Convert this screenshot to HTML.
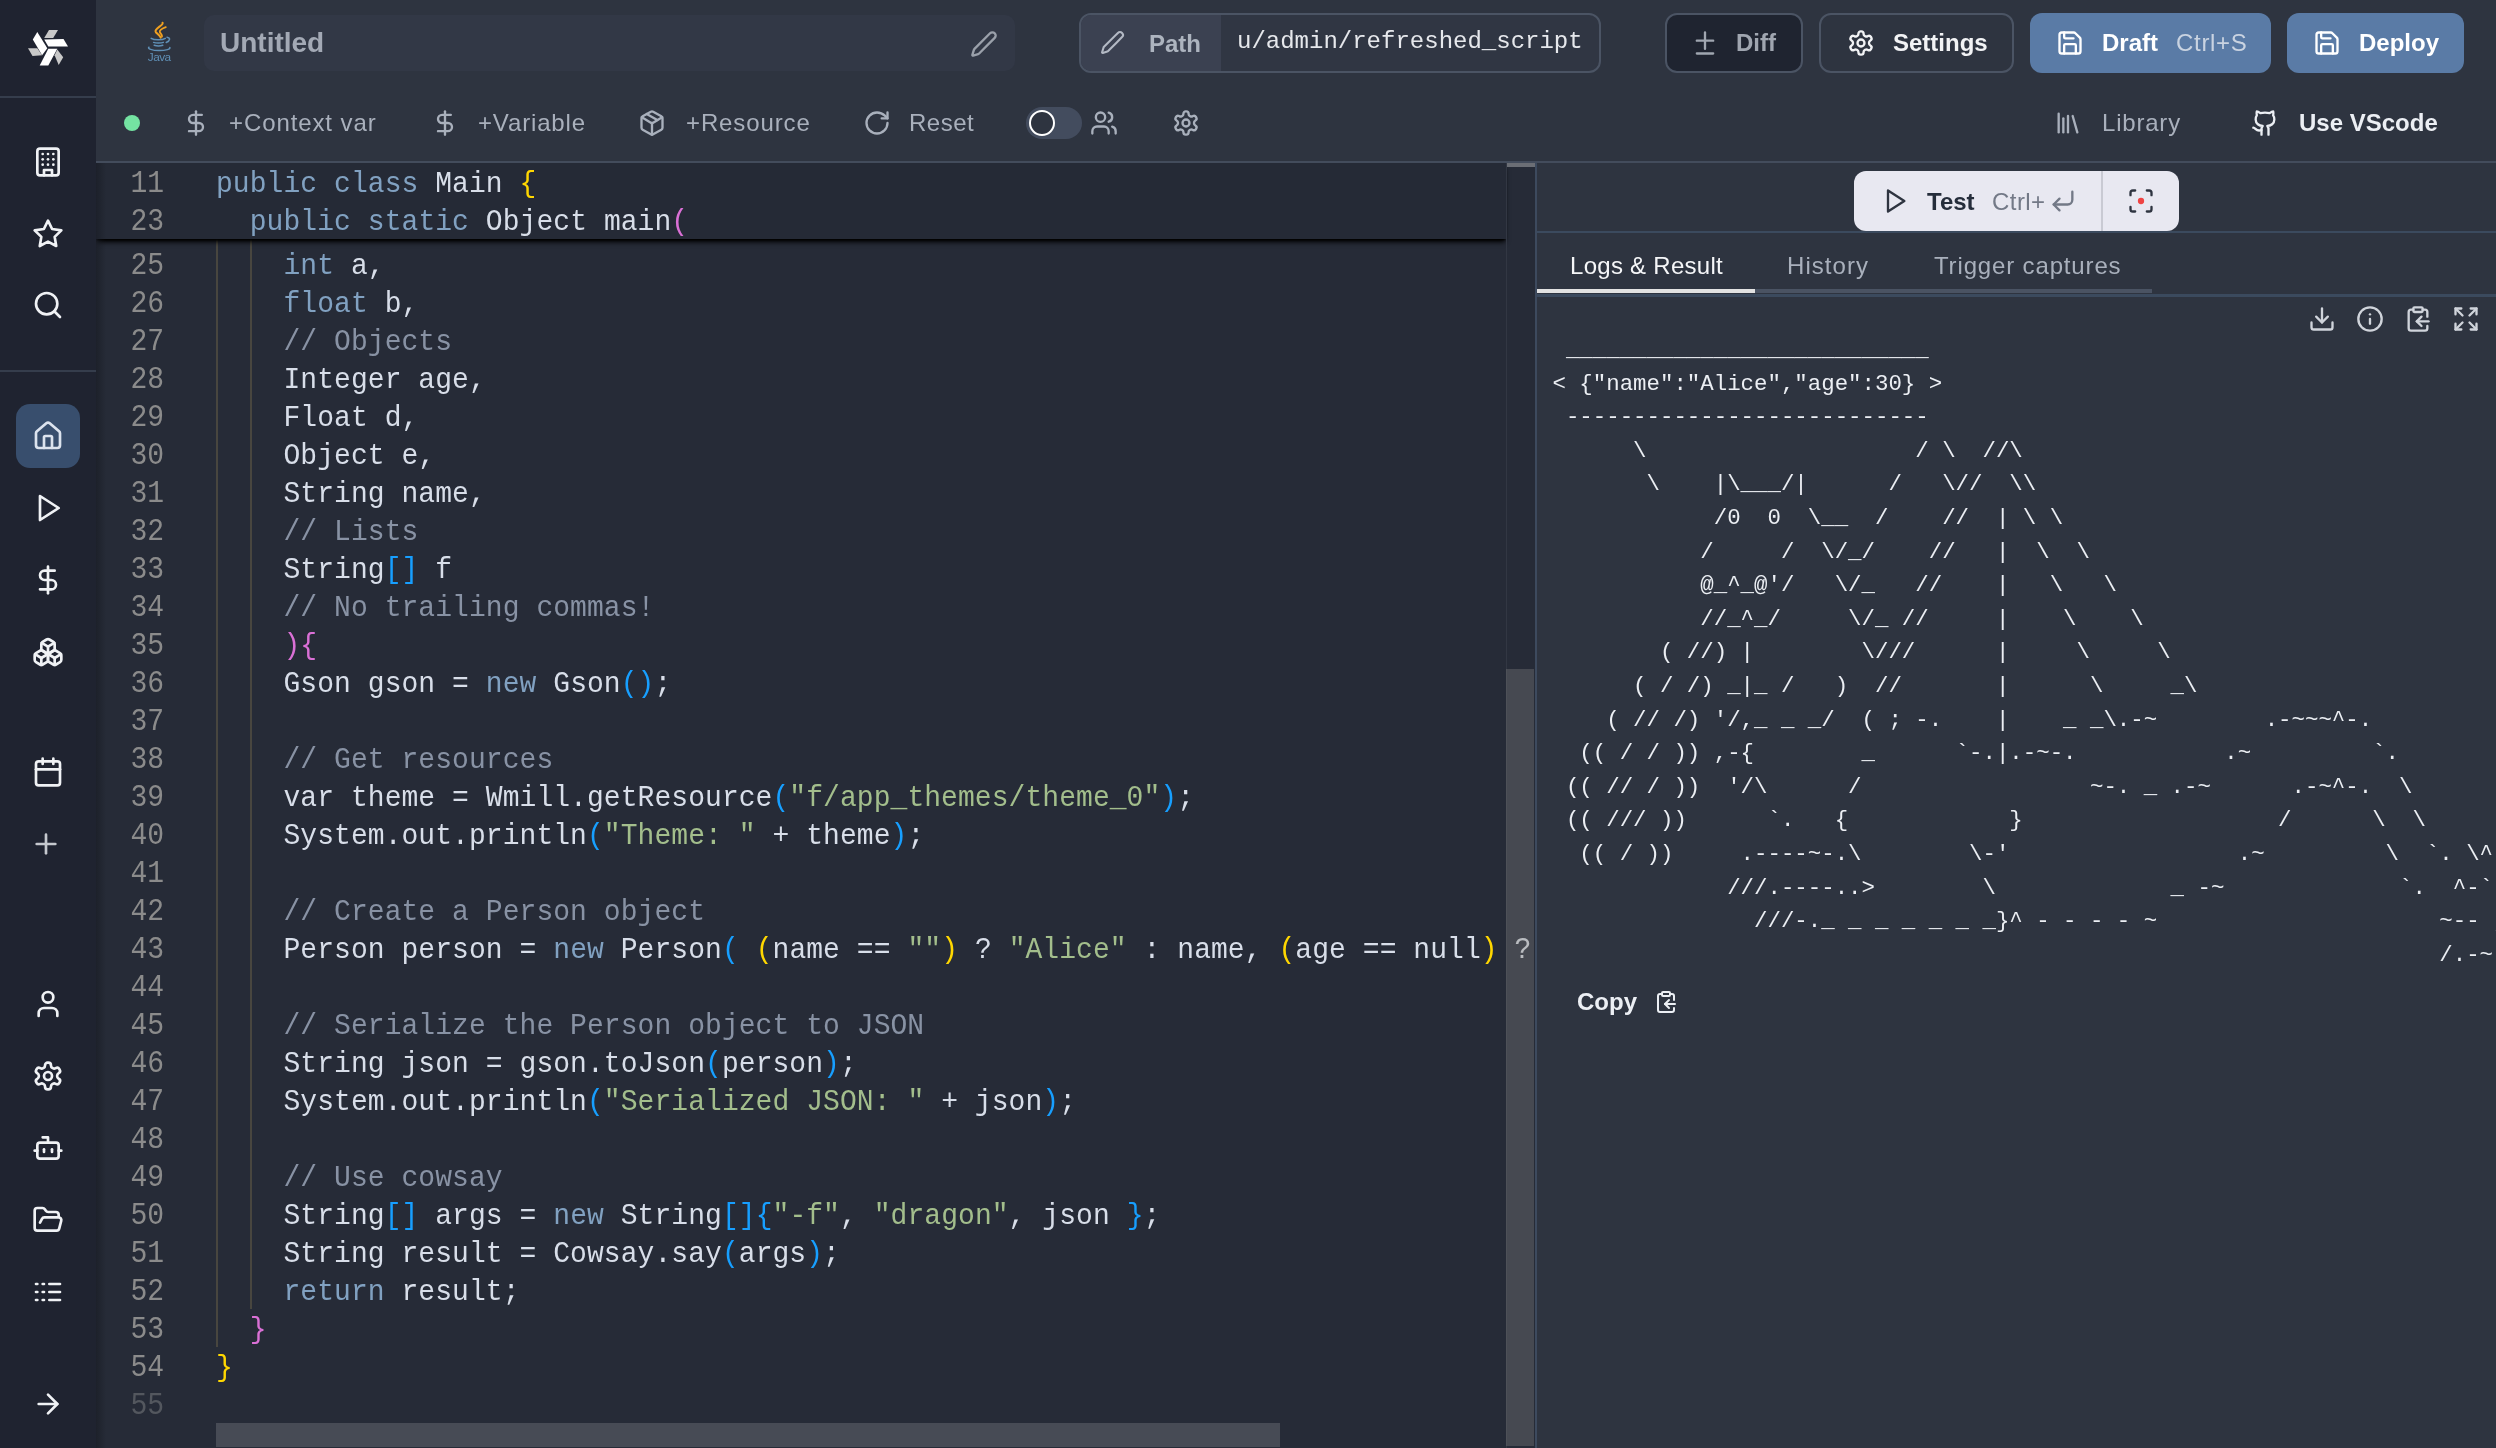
<!DOCTYPE html><html><head><meta charset="utf-8"><style>
*{margin:0;padding:0;box-sizing:border-box}
#sidebar,#header,#editor,#right{will-change:transform}
html,body{width:2496px;height:1448px;overflow:hidden;background:#2e3440;font-family:"Liberation Sans",sans-serif}
.abs{position:absolute}
.ic{position:absolute;overflow:visible}
#sidebar{position:absolute;left:0;top:0;width:96px;height:1448px;background:#1f2330}
#header{position:absolute;left:96px;top:0;width:2400px;height:163px;background:#2e3440}
.t{position:absolute;white-space:pre;line-height:1}
#editor{position:absolute;left:96px;top:163px;width:1439px;height:1285px;background:#262b37;overflow:hidden}
#editor .ln{position:absolute;left:0;width:68px;text-align:right;color:#8b8b8b;font-family:"Liberation Mono",monospace;font-size:28px;line-height:38px;height:38px;padding-top:3.5px;transform:scaleY(1.12);transform-origin:0 30px}
#editor .ln.dim{color:#53575e}
#editor .cl{position:absolute;left:120px;white-space:pre;color:#d8dee9;font-family:"Liberation Mono",monospace;font-size:28px;letter-spacing:0.06px;line-height:38px;height:38px;padding-top:4px;transform:scaleY(1.08);transform-origin:0 30.5px}
#sticky{position:absolute;left:0;top:0;width:1410px;height:76px;background:#252a36;z-index:3;box-shadow:0 4px 5px -1px #000,0 2px 2px -1px #000}
#lines{position:absolute;left:0;top:0;width:1439px;height:1285px}
.k{color:#81a1c1}.c{color:#8892a4}.s{color:#a3be8c}.y{color:#ffd700}.p{color:#da70d6}.b{color:#179fff}.o{color:#e5e9f0}
#right{position:absolute;left:1537px;top:163px;width:959px;height:1285px;background:#2e3440;overflow:hidden}
pre.out{position:absolute;left:15.5px;top:171px;font-family:"Liberation Mono",monospace;font-size:22.4px;line-height:33.6px;color:#eceff4;white-space:pre}
</style></head><body><div id="sidebar"><svg class="ic" style="left:0;top:0;width:96px;height:96px" viewBox="0 0 96 96">
<polygon fill="#ffffff" points="32.8,39.4 37.3,31.9 47.3,48.3 42.1,55.2"/>
<polygon fill="#c8c8c8" points="28,48.3 37.3,48.3 42.1,55.2 32.5,56"/>
<polygon fill="#ffffff" points="44.2,39.4 63.5,39 68,46.6 48.3,46.6"/>
<polygon fill="#c8c8c8" points="44.2,38 49,30 58,30 53.2,38"/>
<polygon fill="#ffffff" points="48.3,48.7 57.3,48.7 48.3,65.6 39.7,65.6"/>
<polygon fill="#c8c8c8" points="54.6,55.2 57.3,49.4 63.2,57.3 58.7,64.9"/>
</svg><div class="abs" style="left:0;top:96px;width:96px;height:2px;background:#353d4c"></div><div class="abs" style="left:0;top:370px;width:96px;height:2px;background:#353d4c"></div><div class="abs" style="left:16px;top:404px;width:64px;height:64px;border-radius:14px;background:#384e6d"></div><svg class="ic" style="left:32.0px;top:146.0px;width:32px;height:32px" viewBox="0 0 24 24" fill="none" stroke="#f0f2f5" stroke-width="2" stroke-linecap="round" stroke-linejoin="round"><rect width="16" height="20" x="4" y="2" rx="2" ry="2"/><path d="M9 22v-4h6v4"/><path d="M8 6h.01"/><path d="M16 6h.01"/><path d="M12 6h.01"/><path d="M12 10h.01"/><path d="M12 14h.01"/><path d="M16 10h.01"/><path d="M16 14h.01"/><path d="M8 10h.01"/><path d="M8 14h.01"/></svg><svg class="ic" style="left:32.0px;top:218.0px;width:32px;height:32px" viewBox="0 0 24 24" fill="none" stroke="#f0f2f5" stroke-width="2" stroke-linecap="round" stroke-linejoin="round"><polygon points="12 2 15.09 8.26 22 9.27 17 14.14 18.18 21.02 12 17.77 5.82 21.02 7 14.14 2 9.27 8.91 8.26 12 2"/></svg><svg class="ic" style="left:32.0px;top:289.0px;width:32px;height:32px" viewBox="0 0 24 24" fill="none" stroke="#f0f2f5" stroke-width="2" stroke-linecap="round" stroke-linejoin="round"><circle cx="11" cy="11" r="8"/><path d="m21 21-4.3-4.3"/></svg><svg class="ic" style="left:32.0px;top:420.0px;width:32px;height:32px" viewBox="0 0 24 24" fill="none" stroke="#dce3ee" stroke-width="2" stroke-linecap="round" stroke-linejoin="round"><path d="M15 21v-8a1 1 0 0 0-1-1h-4a1 1 0 0 0-1 1v8"/><path d="M3 10a2 2 0 0 1 .709-1.528l7-5.999a2 2 0 0 1 2.582 0l7 5.999A2 2 0 0 1 21 10v9a2 2 0 0 1-2 2H5a2 2 0 0 1-2-2z"/></svg><svg class="ic" style="left:32.0px;top:492.0px;width:32px;height:32px" viewBox="0 0 24 24" fill="none" stroke="#f0f2f5" stroke-width="2" stroke-linecap="round" stroke-linejoin="round"><polygon points="6 3 20 12 6 21 6 3"/></svg><svg class="ic" style="left:32.0px;top:564.0px;width:32px;height:32px" viewBox="0 0 24 24" fill="none" stroke="#f0f2f5" stroke-width="2" stroke-linecap="round" stroke-linejoin="round"><line x1="12" x2="12" y1="2" y2="22"/><path d="M17 5H9.5a3.5 3.5 0 0 0 0 7h5a3.5 3.5 0 0 1 0 7H6"/></svg><svg class="ic" style="left:32.0px;top:636.0px;width:32px;height:32px" viewBox="0 0 24 24" fill="none" stroke="#f0f2f5" stroke-width="2" stroke-linecap="round" stroke-linejoin="round"><path d="M2.97 12.92A2 2 0 0 0 2 14.63v3.24a2 2 0 0 0 .97 1.71l3 1.8a2 2 0 0 0 2.06 0L12 19v-5.5l-5-3-4.03 2.42Z"/><path d="m7 16.5-4.74-2.85"/><path d="m7 16.5 5-3"/><path d="M7 16.5v5.17"/><path d="M12 13.5V19l3.97 2.38a2 2 0 0 0 2.06 0l3-1.8a2 2 0 0 0 .97-1.71v-3.24a2 2 0 0 0-.97-1.71L17 10.5l-5 3Z"/><path d="m17 16.5-5-3"/><path d="m17 16.5 4.74-2.850"/><path d="M17 16.5v5.17"/><path d="M7.97 4.42A2 2 0 0 0 7 6.13v4.37l5 3 5-3V6.13a2 2 0 0 0-.97-1.71l-3-1.8a2 2 0 0 0-2.06 0l-3 1.8Z"/><path d="M12 8 7.26 5.15"/><path d="m12 8 4.74-2.85"/><path d="M12 13.5V8"/></svg><svg class="ic" style="left:32.0px;top:756.0px;width:32px;height:32px" viewBox="0 0 24 24" fill="none" stroke="#f0f2f5" stroke-width="2" stroke-linecap="round" stroke-linejoin="round"><path d="M8 2v4"/><path d="M16 2v4"/><rect width="18" height="18" x="3" y="4" rx="2"/><path d="M3 10h18"/></svg><svg class="ic" style="left:30.0px;top:828.0px;width:32px;height:32px" viewBox="0 0 24 24" fill="none" stroke="#c5c8ce" stroke-width="2" stroke-linecap="round" stroke-linejoin="round"><path d="M5 12h14"/><path d="M12 5v14"/></svg><svg class="ic" style="left:32.0px;top:988.0px;width:32px;height:32px" viewBox="0 0 24 24" fill="none" stroke="#f0f2f5" stroke-width="2" stroke-linecap="round" stroke-linejoin="round"><path d="M19 21v-2a4 4 0 0 0-4-4H9a4 4 0 0 0-4 4v2"/><circle cx="12" cy="7" r="4"/></svg><svg class="ic" style="left:32.0px;top:1060.0px;width:32px;height:32px" viewBox="0 0 24 24" fill="none" stroke="#f0f2f5" stroke-width="2" stroke-linecap="round" stroke-linejoin="round"><path d="M12.22 2h-.44a2 2 0 0 0-2 2v.18a2 2 0 0 1-1 1.730l-.43.25a2 2 0 0 1-2 0l-.15-.08a2 2 0 0 0-2.73.73l-.22.38a2 2 0 0 0 .73 2.730l.15.1a2 2 0 0 1 1 1.72v.51a2 2 0 0 1-1 1.740l-.15.09a2 2 0 0 0-.73 2.73l.22.38a2 2 0 0 0 2.73.73l.15-.08a2 2 0 0 1 2 0l.43.25a2 2 0 0 1 1 1.73V20a2 2 0 0 0 2 2h.44a2 2 0 0 0 2-2v-.18a2 2 0 0 1 1-1.73l.43-.25a2 2 0 0 1 2 0l.15.08a2 2 0 0 0 2.73-.73l.22-.39a2 2 0 0 0-.73-2.73l-.15-.08a2 2 0 0 1-1-1.74v-.5a2 2 0 0 1 1-1.74l.15-.09a2 2 0 0 0 .73-2.73l-.22-.38a2 2 0 0 0-2.73-.73l-.15.08a2 2 0 0 1-2 0l-.43-.25a2 2 0 0 1-1-1.73V4a2 2 0 0 0-2-2z"/><circle cx="12" cy="12" r="3"/></svg><svg class="ic" style="left:32.0px;top:1132.0px;width:32px;height:32px" viewBox="0 0 24 24" fill="none" stroke="#f0f2f5" stroke-width="2" stroke-linecap="round" stroke-linejoin="round"><path d="M12 8V4H8"/><rect width="16" height="12" x="4" y="8" rx="2"/><path d="M2 14h2"/><path d="M20 14h2"/><path d="M15 13v2"/><path d="M9 13v2"/></svg><svg class="ic" style="left:32.0px;top:1204.0px;width:32px;height:32px" viewBox="0 0 24 24" fill="none" stroke="#f0f2f5" stroke-width="2" stroke-linecap="round" stroke-linejoin="round"><path d="m6 14 1.5-2.9A2 2 0 0 1 9.24 10H20a2 2 0 0 1 1.94 2.5l-1.54 6a2 2 0 0 1-1.95 1.5H4a2 2 0 0 1-2-2V5a2 2 0 0 1 2-2h3.9a2 2 0 0 1 1.69.9l.81 1.2a2 2 0 0 0 1.67.9H18a2 2 0 0 1 2 2v2"/></svg><svg class="ic" style="left:32.0px;top:1276.0px;width:32px;height:32px" viewBox="0 0 24 24" fill="none" stroke="#f0f2f5" stroke-width="2" stroke-linecap="round" stroke-linejoin="round"><path d="M13 12h8"/><path d="M13 18h8"/><path d="M13 6h8"/><path d="M3 12h1"/><path d="M3 18h1"/><path d="M3 6h1"/><path d="M8 12h1"/><path d="M8 18h1"/><path d="M8 6h1"/></svg><svg class="ic" style="left:32.0px;top:1388.0px;width:32px;height:32px" viewBox="0 0 24 24" fill="none" stroke="#f0f2f5" stroke-width="2" stroke-linecap="round" stroke-linejoin="round"><path d="M5 12h14"/><path d="m12 5 7 7-7 7"/></svg></div>
<div id="header"><svg class="ic" style="left:50px;top:22px;width:26px;height:42px" viewBox="0 0 26 42">
<path d="M16.6 0.8 C 17.5 3.5, 9 6, 9.6 9.5 C 10 11.5, 13.5 12.5, 14.8 15.6" stroke="#f0a020" stroke-width="2.1" fill="none" stroke-linecap="round"/>
<path d="M19.8 5.2 C 16.5 6.5, 13.2 8, 13.8 10 C 14.2 11.5, 16.5 12.5, 16 14.5" stroke="#f0a020" stroke-width="1.8" fill="none" stroke-linecap="round"/>
<path d="M5.2 16.3 C 8 18.2, 16.5 18.2, 19.3 16.3 M21 15.2 C 24.5 15.8, 24.5 18.5, 20.2 20.5 M7.6 20.4 C 10 21.3, 15 21.3, 17.3 20.4 M8.2 23.3 C 10.5 24, 14.5 24, 16.8 23.3 M3 25.2 C 1 26.5, 6 28.6, 13 28.6 C 20 28.6, 25 27, 23.8 25.5" stroke="#5f8fb5" stroke-width="1.5" fill="none" stroke-linecap="round"/>
<text x="13.2" y="39" text-anchor="middle" font-family="Liberation Sans" font-size="11.8" letter-spacing="-0.5" fill="#5f8fb5">Java</text>
</svg><div class="abs" style="left:108px;top:15px;width:811px;height:56px;border-radius:10px;background:#323846"></div><div class="t" style="left:124px;top:29px;font-size:28px;font-weight:700;color:#a3a9b5">Untitled</div><svg class="ic" style="left:874px;top:30px;width:28px;height:28px" viewBox="0 0 24 24" fill="none" stroke="#9aa0aa" stroke-width="2" stroke-linecap="round" stroke-linejoin="round"><path d="M21.174 6.812a1 1 0 0 0-3.986-3.987L3.842 16.174a2 2 0 0 0-.5.83l-1.321 4.352a.5.5 0 0 0 .623.622l4.353-1.32a2 2 0 0 0 .83-.497z"/></svg><div class="abs" style="left:983px;top:13px;width:522px;height:60px;border-radius:12px;border:2px solid #4b5464;background:#303643;overflow:hidden"><div class="abs" style="left:0;top:0;width:140px;height:56px;background:#3b4151"></div></div><svg class="ic" style="left:1004px;top:30px;width:25px;height:25px" viewBox="0 0 24 24" fill="none" stroke="#b3b9c4" stroke-width="2" stroke-linecap="round" stroke-linejoin="round"><path d="M21.174 6.812a1 1 0 0 0-3.986-3.987L3.842 16.174a2 2 0 0 0-.5.83l-1.321 4.352a.5.5 0 0 0 .623.622l4.353-1.32a2 2 0 0 0 .83-.497z"/></svg><div class="t" style="left:1053px;top:32px;font-size:24px;font-weight:700;color:#adb4bf">Path</div><div class="t" style="left:1141px;top:30px;font-size:24px;font-family:'Liberation Mono',monospace;color:#e6e8ec">u/admin/refreshed_script</div><div class="abs" style="left:1569px;top:13px;width:138px;height:60px;border-radius:12px;border:2px solid #4b5464;background:#1f2430"></div><svg class="ic" style="left:1595px;top:29px;width:28px;height:28px" viewBox="0 0 24 24" fill="none" stroke="#a0a6b0" stroke-width="2" stroke-linecap="round" stroke-linejoin="round"><path d="M12 3v14"/><path d="M5 10h14"/><path d="M5 21h14"/></svg><div class="t" style="left:1640px;top:31px;font-size:24px;font-weight:700;color:#a0a6b0">Diff</div><div class="abs" style="left:1723px;top:13px;width:195px;height:60px;border-radius:12px;border:2px solid #4b5464"></div><svg class="ic" style="left:1751px;top:29px;width:28px;height:28px" viewBox="0 0 24 24" fill="none" stroke="#f2f3f5" stroke-width="2" stroke-linecap="round" stroke-linejoin="round"><path d="M12.22 2h-.44a2 2 0 0 0-2 2v.18a2 2 0 0 1-1 1.730l-.43.25a2 2 0 0 1-2 0l-.15-.08a2 2 0 0 0-2.73.73l-.22.38a2 2 0 0 0 .73 2.730l.15.1a2 2 0 0 1 1 1.72v.51a2 2 0 0 1-1 1.740l-.15.09a2 2 0 0 0-.73 2.73l.22.38a2 2 0 0 0 2.73.73l.15-.08a2 2 0 0 1 2 0l.43.25a2 2 0 0 1 1 1.73V20a2 2 0 0 0 2 2h.44a2 2 0 0 0 2-2v-.18a2 2 0 0 1 1-1.73l.43-.25a2 2 0 0 1 2 0l.15.08a2 2 0 0 0 2.73-.73l.22-.39a2 2 0 0 0-.73-2.73l-.15-.08a2 2 0 0 1-1-1.74v-.5a2 2 0 0 1 1-1.74l.15-.09a2 2 0 0 0 .73-2.73l-.22-.38a2 2 0 0 0-2.73-.73l-.15.08a2 2 0 0 1-2 0l-.43-.25a2 2 0 0 1-1-1.73V4a2 2 0 0 0-2-2z"/><circle cx="12" cy="12" r="3"/></svg><div class="t" style="left:1797px;top:31px;font-size:24px;font-weight:700;color:#f2f3f5">Settings</div><div class="abs" style="left:1934px;top:13px;width:241px;height:60px;border-radius:12px;background:#5a7ba6"></div><svg class="ic" style="left:1960px;top:29px;width:28px;height:28px" viewBox="0 0 24 24" fill="none" stroke="#ffffff" stroke-width="2" stroke-linecap="round" stroke-linejoin="round"><path d="M15.2 3a2 2 0 0 1 1.4.6l3.8 3.8a2 2 0 0 1 .6 1.4V19a2 2 0 0 1-2 2H5a2 2 0 0 1-2-2V5a2 2 0 0 1 2-2z"/><path d="M17 21v-7a1 1 0 0 0-1-1H8a1 1 0 0 0-1 1v7"/><path d="M7 3v4a1 1 0 0 0 1 1h7"/></svg><div class="t" style="left:2006px;top:31px;font-size:24px;font-weight:700;color:#ffffff">Draft</div><div class="t" style="left:2080px;top:31px;font-size:24px;letter-spacing:0.7px;color:#c9d3e1">Ctrl+S</div><div class="abs" style="left:2191px;top:13px;width:177px;height:60px;border-radius:12px;background:#5a7ba6"></div><svg class="ic" style="left:2217px;top:29px;width:28px;height:28px" viewBox="0 0 24 24" fill="none" stroke="#ffffff" stroke-width="2" stroke-linecap="round" stroke-linejoin="round"><path d="M15.2 3a2 2 0 0 1 1.4.6l3.8 3.8a2 2 0 0 1 .6 1.4V19a2 2 0 0 1-2 2H5a2 2 0 0 1-2-2V5a2 2 0 0 1 2-2z"/><path d="M17 21v-7a1 1 0 0 0-1-1H8a1 1 0 0 0-1 1v7"/><path d="M7 3v4a1 1 0 0 0 1 1h7"/></svg><div class="t" style="left:2263px;top:31px;font-size:24px;font-weight:700;color:#ffffff">Deploy</div><div class="abs" style="left:28px;top:115px;width:16px;height:16px;border-radius:8px;background:#74e3a2"></div><svg class="ic" style="left:86px;top:109px;width:28px;height:28px" viewBox="0 0 24 24" fill="none" stroke="#a9b0bc" stroke-width="2" stroke-linecap="round" stroke-linejoin="round"><line x1="12" x2="12" y1="2" y2="22"/><path d="M17 5H9.5a3.5 3.5 0 0 0 0 7h5a3.5 3.5 0 0 1 0 7H6"/></svg><div class="t" style="left:133px;top:111px;font-size:24px;letter-spacing:0.9px;color:#a9b0bc">+Context var</div><svg class="ic" style="left:335px;top:109px;width:28px;height:28px" viewBox="0 0 24 24" fill="none" stroke="#a9b0bc" stroke-width="2" stroke-linecap="round" stroke-linejoin="round"><line x1="12" x2="12" y1="2" y2="22"/><path d="M17 5H9.5a3.5 3.5 0 0 0 0 7h5a3.5 3.5 0 0 1 0 7H6"/></svg><div class="t" style="left:382px;top:111px;font-size:24px;letter-spacing:0.85px;color:#a9b0bc">+Variable</div><svg class="ic" style="left:542px;top:109px;width:28px;height:28px" viewBox="0 0 24 24" fill="none" stroke="#a9b0bc" stroke-width="2" stroke-linecap="round" stroke-linejoin="round"><path d="M11 21.73a2 2 0 0 0 2 0l7-4A2 2 0 0 0 21 16V8a2 2 0 0 0-1-1.73l-7-4a2 2 0 0 0-2 0l-7 4A2 2 0 0 0 3 8v8a2 2 0 0 0 1 1.73z"/><path d="M12 22V12"/><path d="m3.3 7 7.703 4.734a2 2 0 0 0 1.994 0L20.7 7"/><path d="m7.5 4.27 9 5.15"/></svg><div class="t" style="left:590px;top:111px;font-size:24px;letter-spacing:0.88px;color:#a9b0bc">+Resource</div><svg class="ic" style="left:767px;top:109px;width:28px;height:28px" viewBox="0 0 24 24" fill="none" stroke="#a9b0bc" stroke-width="2" stroke-linecap="round" stroke-linejoin="round"><path d="M21 12a9 9 0 1 1-9-9c2.52 0 4.93 1 6.74 2.74L21 8"/><path d="M21 3v5h-5"/></svg><div class="t" style="left:813px;top:111px;font-size:24px;letter-spacing:0.5px;color:#a9b0bc">Reset</div><div class="abs" style="left:930px;top:107px;width:56px;height:32px;border-radius:16px;background:#434c5e"></div><div class="abs" style="left:933px;top:110px;width:26px;height:26px;border-radius:13px;border:2.5px solid #ffffff;background:#2e3440"></div><svg class="ic" style="left:994px;top:109px;width:28px;height:28px" viewBox="0 0 24 24" fill="none" stroke="#a9b0bc" stroke-width="2" stroke-linecap="round" stroke-linejoin="round"><path d="M16 21v-2a4 4 0 0 0-4-4H6a4 4 0 0 0-4 4v2"/><circle cx="9" cy="7" r="4"/><path d="M22 21v-2a4 4 0 0 0-3-3.87"/><path d="M16 3.13a4 4 0 0 1 0 7.75"/></svg><svg class="ic" style="left:1076px;top:109px;width:28px;height:28px" viewBox="0 0 24 24" fill="none" stroke="#a9b0bc" stroke-width="2" stroke-linecap="round" stroke-linejoin="round"><path d="M12.22 2h-.44a2 2 0 0 0-2 2v.18a2 2 0 0 1-1 1.730l-.43.25a2 2 0 0 1-2 0l-.15-.08a2 2 0 0 0-2.73.73l-.22.38a2 2 0 0 0 .73 2.730l.15.1a2 2 0 0 1 1 1.72v.51a2 2 0 0 1-1 1.740l-.15.09a2 2 0 0 0-.73 2.73l.22.38a2 2 0 0 0 2.73.73l.15-.08a2 2 0 0 1 2 0l.43.25a2 2 0 0 1 1 1.73V20a2 2 0 0 0 2 2h.44a2 2 0 0 0 2-2v-.18a2 2 0 0 1 1-1.73l.43-.25a2 2 0 0 1 2 0l.15.08a2 2 0 0 0 2.73-.73l.22-.39a2 2 0 0 0-.73-2.73l-.15-.08a2 2 0 0 1-1-1.74v-.5a2 2 0 0 1 1-1.74l.15-.09a2 2 0 0 0 .73-2.73l-.22-.38a2 2 0 0 0-2.73-.73l-.15.08a2 2 0 0 1-2 0l-.43-.25a2 2 0 0 1-1-1.73V4a2 2 0 0 0-2-2z"/><circle cx="12" cy="12" r="3"/></svg><svg class="ic" style="left:1958px;top:109px;width:28px;height:28px" viewBox="0 0 24 24" fill="none" stroke="#a9b0bc" stroke-width="2" stroke-linecap="round" stroke-linejoin="round"><path d="m16 6 4 14"/><path d="M12 6v14"/><path d="M8 8v12"/><path d="M4 4v16"/></svg><div class="t" style="left:2006px;top:111px;font-size:24px;letter-spacing:0.8px;color:#a9b0bc">Library</div><svg class="ic" style="left:2155px;top:109px;width:28px;height:28px" viewBox="0 0 24 24" fill="none" stroke="#eceff4" stroke-width="2" stroke-linecap="round" stroke-linejoin="round"><path d="M15 22v-4a4.8 4.8 0 0 0-1-3.5c3 0 6-2 6-5.5.08-1.25-.27-2.48-1-3.5.28-1.15.28-2.35 0-3.5 0 0-1 0-3 1.5-2.64-.5-5.36-.5-8 0C6 2 5 2 5 2c-.3 1.15-.3 2.35 0 3.5A5.403 5.403 0 0 0 4 9c0 3.5 3 5.5 6 5.5-.39.49-.68 1.05-.85 1.650-.17.6-.22 1.23-.15 1.85v4"/><path d="M9 18c-4.51 2-5-2-7-2"/></svg><div class="t" style="left:2203px;top:111px;font-size:24px;font-weight:700;color:#eceff4">Use VScode</div><div class="abs" style="left:0;top:161px;width:2400px;height:2px;background:#434c5c"></div></div>
<div id="editor"><div class="abs" style="left:0;top:0;width:10px;height:1285px;background:linear-gradient(90deg,rgba(20,23,30,0.5),rgba(20,23,30,0));z-index:6"></div><div id="sticky">
<div class="ln" style="top:-1px">11</div><div class="cl" style="top:-1px"><span class="k">public</span> <span class="k">class</span> Main <span class="y">{</span></div>
<div class="ln" style="top:37px">23</div><div class="cl" style="top:37px">  <span class="k">public</span> <span class="k">static</span> Object main<span class="p">(</span></div>
</div>
<div id="lines">
<div class="ln" style="top:81px">25</div><div class="cl" style="top:81px">    <span class="k">int</span> a,</div>
<div class="ln" style="top:119px">26</div><div class="cl" style="top:119px">    <span class="k">float</span> b,</div>
<div class="ln" style="top:157px">27</div><div class="cl" style="top:157px">    <span class="c">// Objects</span></div>
<div class="ln" style="top:195px">28</div><div class="cl" style="top:195px">    Integer age,</div>
<div class="ln" style="top:233px">29</div><div class="cl" style="top:233px">    Float d,</div>
<div class="ln" style="top:271px">30</div><div class="cl" style="top:271px">    Object e,</div>
<div class="ln" style="top:309px">31</div><div class="cl" style="top:309px">    String name,</div>
<div class="ln" style="top:347px">32</div><div class="cl" style="top:347px">    <span class="c">// Lists</span></div>
<div class="ln" style="top:385px">33</div><div class="cl" style="top:385px">    String<span class="b">[]</span> f</div>
<div class="ln" style="top:423px">34</div><div class="cl" style="top:423px">    <span class="c">// No trailing commas!</span></div>
<div class="ln" style="top:461px">35</div><div class="cl" style="top:461px">    <span class="p">){</span></div>
<div class="ln" style="top:499px">36</div><div class="cl" style="top:499px">    Gson gson = <span class="k">new</span> Gson<span class="b">()</span>;</div>
<div class="ln" style="top:537px">37</div><div class="cl" style="top:537px"></div>
<div class="ln" style="top:575px">38</div><div class="cl" style="top:575px">    <span class="c">// Get resources</span></div>
<div class="ln" style="top:613px">39</div><div class="cl" style="top:613px">    var theme = Wmill.getResource<span class="b">(</span><span class="s">&quot;f/app_themes/theme_0&quot;</span><span class="b">)</span>;</div>
<div class="ln" style="top:651px">40</div><div class="cl" style="top:651px">    System.out.println<span class="b">(</span><span class="s">&quot;Theme: &quot;</span> + theme<span class="b">)</span>;</div>
<div class="ln" style="top:689px">41</div><div class="cl" style="top:689px"></div>
<div class="ln" style="top:727px">42</div><div class="cl" style="top:727px">    <span class="c">// Create a Person object</span></div>
<div class="ln" style="top:765px">43</div><div class="cl" style="top:765px">    Person person = <span class="k">new</span> Person<span class="b">(</span> <span class="y">(</span>name == <span class="s">&quot;&quot;</span><span class="y">)</span> ? <span class="s">&quot;Alice&quot;</span> : name, <span class="y">(</span>age == null<span class="y">)</span> <span class="o">?</span></div>
<div class="ln" style="top:803px">44</div><div class="cl" style="top:803px"></div>
<div class="ln" style="top:841px">45</div><div class="cl" style="top:841px">    <span class="c">// Serialize the Person object to JSON</span></div>
<div class="ln" style="top:879px">46</div><div class="cl" style="top:879px">    String json = gson.toJson<span class="b">(</span>person<span class="b">)</span>;</div>
<div class="ln" style="top:917px">47</div><div class="cl" style="top:917px">    System.out.println<span class="b">(</span><span class="s">&quot;Serialized JSON: &quot;</span> + json<span class="b">)</span>;</div>
<div class="ln" style="top:955px">48</div><div class="cl" style="top:955px"></div>
<div class="ln" style="top:993px">49</div><div class="cl" style="top:993px">    <span class="c">// Use cowsay</span></div>
<div class="ln" style="top:1031px">50</div><div class="cl" style="top:1031px">    String<span class="b">[]</span> args = <span class="k">new</span> String<span class="b">[]{</span><span class="s">&quot;-f&quot;</span>, <span class="s">&quot;dragon&quot;</span>, json <span class="b">}</span>;</div>
<div class="ln" style="top:1069px">51</div><div class="cl" style="top:1069px">    String result = Cowsay.say<span class="b">(</span>args<span class="b">)</span>;</div>
<div class="ln" style="top:1107px">52</div><div class="cl" style="top:1107px">    <span class="k">return</span> result;</div>
<div class="ln" style="top:1145px">53</div><div class="cl" style="top:1145px">  <span class="p">}</span></div>
<div class="ln" style="top:1183px">54</div><div class="cl" style="top:1183px"><span class="y">}</span></div>
<div class="ln dim" style="top:1221px">55</div><div class="cl" style="top:1221px"></div>
</div><div class="abs" style="left:120px;top:76px;width:2px;height:1108px;background:#48463f;z-index:1"></div><div class="abs" style="left:154px;top:76px;width:2px;height:1070px;background:#48463f;z-index:1"></div><div class="abs" style="left:1410px;top:0;width:1px;height:1285px;background:#323743;z-index:4"></div><div class="abs" style="left:1410px;top:506px;width:28px;height:777px;background:rgba(121,121,121,0.4);z-index:5"></div><div class="abs" style="left:1411px;top:0;width:28px;height:4px;background:#6b6e75;z-index:5"></div><div class="abs" style="left:120px;top:1260px;width:1064px;height:24px;background:#474b55;z-index:5"></div></div>
<div class="abs" style="left:1535px;top:163px;width:2px;height:1285px;background:#3d4a5e"></div>
<div id="right"><div class="abs" style="left:317px;top:8px;width:325px;height:60px;border-radius:12px;background:#e8e8f1"></div><div class="abs" style="left:564px;top:8px;width:2px;height:60px;background:#c9cad3"></div><svg class="ic" style="left:344px;top:24px;width:28px;height:28px" viewBox="0 0 24 24" fill="none" stroke="#2e3440" stroke-width="2" stroke-linecap="round" stroke-linejoin="round"><polygon points="6 3 20 12 6 21 6 3"/></svg><div class="t" style="left:390px;top:27px;font-size:24px;font-weight:700;color:#252d3b">Test</div><div class="t" style="left:455px;top:27px;font-size:24px;letter-spacing:0.45px;color:#737987">Ctrl+</div><svg class="ic" style="left:512px;top:24px;width:28px;height:28px" viewBox="0 0 24 24" fill="none" stroke="#737987" stroke-width="2" stroke-linecap="round" stroke-linejoin="round"><polyline points="9 10 4 15 9 20"/><path d="M20 4v7a4 4 0 0 1-4 4H4"/></svg><svg class="ic" style="left:590px;top:24px;width:28px;height:28px" viewBox="0 0 24 24" fill="none" stroke="#2e3440" stroke-width="2" stroke-linecap="round" stroke-linejoin="round"><path d="M3 7V5a2 2 0 0 1 2-2h2"/><path d="M17 3h2a2 2 0 0 1 2 2v2"/><path d="M21 17v2a2 2 0 0 1-2 2h-2"/><path d="M7 21H5a2 2 0 0 1-2-2v-2"/><circle cx="12" cy="12" r="2.7" fill="#ef4444" stroke="none"/></svg><div class="abs" style="left:0;top:68px;width:959px;height:2px;background:#3b4a5e"></div><div class="t" style="left:33px;top:91px;font-size:24px;letter-spacing:0.28px;color:#f5f6f8">Logs &amp; Result</div><div class="t" style="left:250px;top:91px;font-size:24px;letter-spacing:1.05px;color:#a9b0bc">History</div><div class="t" style="left:397px;top:91px;font-size:24px;letter-spacing:0.85px;color:#a9b0bc">Trigger captures</div><div class="abs" style="left:0;top:126px;width:218px;height:4px;background:#e2e2e2"></div><div class="abs" style="left:218px;top:126px;width:397px;height:4px;background:#4a5363"></div><div class="abs" style="left:0;top:131px;width:959px;height:3px;background:#3b4a5e"></div><svg class="ic" style="left:771px;top:142px;width:28px;height:28px" viewBox="0 0 24 24" fill="none" stroke="#d0d4db" stroke-width="2" stroke-linecap="round" stroke-linejoin="round"><path d="M21 15v4a2 2 0 0 1-2 2H5a2 2 0 0 1-2-2v-4"/><polyline points="7 10 12 15 17 10"/><line x1="12" x2="12" y1="15" y2="3"/></svg><svg class="ic" style="left:819px;top:142px;width:28px;height:28px" viewBox="0 0 24 24" fill="none" stroke="#d0d4db" stroke-width="2" stroke-linecap="round" stroke-linejoin="round"><circle cx="12" cy="12" r="10"/><path d="M12 16v-4"/><path d="M12 8h.01"/></svg><svg class="ic" style="left:867px;top:142px;width:28px;height:28px" viewBox="0 0 24 24" fill="none" stroke="#d0d4db" stroke-width="2" stroke-linecap="round" stroke-linejoin="round"><rect width="8" height="4" x="8" y="2" rx="1" ry="1"/><path d="M8 4H6a2 2 0 0 0-2 2v14a2 2 0 0 0 2 2h12a2 2 0 0 0 2-2v-2"/><path d="M16 4h2a2 2 0 0 1 2 2v4"/><path d="M21 14H11"/><path d="m15 10-4 4 4 4"/></svg><svg class="ic" style="left:915px;top:142px;width:28px;height:28px" viewBox="0 0 24 24" fill="none" stroke="#d0d4db" stroke-width="2" stroke-linecap="round" stroke-linejoin="round"><path d="m15 15 6 6"/><path d="m15 9 6-6"/><path d="M21 16v5h-5"/><path d="M21 8V3h-5"/><path d="M3 16v5h5"/><path d="m3 21 6-6"/><path d="M3 8V3h5"/><path d="M9 9 3 3"/></svg><pre class="out"> ___________________________
&lt; {&quot;name&quot;:&quot;Alice&quot;,&quot;age&quot;:30} &gt;
 ---------------------------
      \                    / \  //\
       \    |\___/|      /   \//  \\
            /0  0  \__  /    //  | \ \    
           /     /  \/_/    //   |  \  \  
           @_^_@&#x27;/   \/_   //    |   \   \ 
           //_^_/     \/_ //     |    \    \
        ( //) |        \///      |     \     \
      ( / /) _|_ /   )  //       |      \     _\
    ( // /) &#x27;/,_ _ _/  ( ; -.    |    _ _\.-~        .-~~~^-.
  (( / / )) ,-{        _      `-.|.-~-.           .~         `.
 (( // / ))  &#x27;/\      /                 ~-. _ .-~      .-~^-.  \
 (( /// ))      `.   {            }                   /      \  \
  (( / ))     .----~-.\        \-&#x27;                 .~         \  `. \^-.
             ///.----..&gt;        \             _ -~             `.  ^-`  ^-_
               ///-._ _ _ _ _ _ _}^ - - - - ~                     ~-- ,.-~
                                                                  /.-~</pre><div class="t" style="left:40px;top:827px;font-size:24px;font-weight:700;color:#eceff4">Copy</div><svg class="ic" style="left:117px;top:827px;width:24px;height:24px" viewBox="0 0 24 24" fill="none" stroke="#eceff4" stroke-width="2" stroke-linecap="round" stroke-linejoin="round"><rect width="8" height="4" x="8" y="2" rx="1" ry="1"/><path d="M8 4H6a2 2 0 0 0-2 2v14a2 2 0 0 0 2 2h12a2 2 0 0 0 2-2v-2"/><path d="M16 4h2a2 2 0 0 1 2 2v4"/><path d="M21 14H11"/><path d="m15 10-4 4 4 4"/></svg></div></body></html>
